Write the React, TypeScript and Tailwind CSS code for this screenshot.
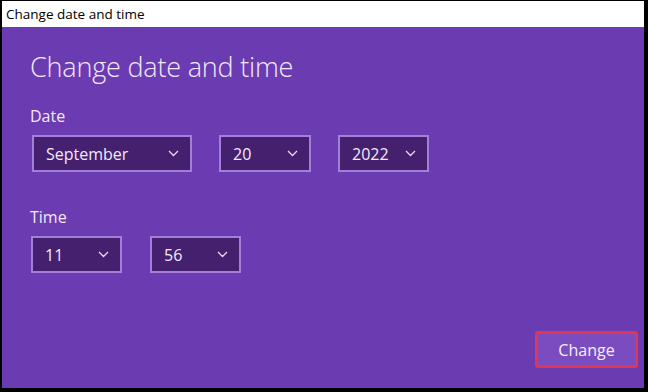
import React from "react";

function Chevron() {
  return (
    <svg width="11" height="7" viewBox="0 0 11 7" fill="none" className="shrink-0">
      <path d="M1 1L5.5 5.5L10 1" stroke="#e9dcf5" strokeWidth="1.3" />
    </svg>
  );
}

function Select({ value, width }: { value: string; width: string }) {
  return (
    <div
      className={`${width} h-[37px] flex items-center justify-between pl-[12px] pr-[11px] bg-[#45206f] border-2 border-[#a47fda] text-[16px] text-[#f3eafb]`}
    >
      <span>{value}</span>
      <Chevron />
    </div>
  );
}

export default function App() {
  return (
    <div
      className="w-[648px] h-[392px] bg-black pt-[1px] pl-[2px] pr-[4px] pb-[4px] flex flex-col"
      style={{ fontFamily: '"Open Sans", "Noto Sans", sans-serif' }}
    >
      <div className="h-[26px] bg-white flex items-center pl-[4px] text-[13.5px] text-black">
        Change date and time
      </div>
      <div className="flex-1 bg-[#6b3bb1] flex flex-col pl-[28px] pr-[6px] text-[#f3e8f8]">
        <h1 className="mt-[23px] text-[27px] font-light leading-[34px] tracking-[-0.2px]">
          Change date and time
        </h1>
        <div className="mt-[21px] text-[16px] leading-[22px]">Date</div>
        <div className="mt-[8px] flex gap-[27px] pl-[2px]">
          <Select value="September" width="w-[160px]" />
          <Select value="20" width="w-[92px]" />
          <Select value="2022" width="w-[91px]" />
        </div>
        <div className="mt-[34px] text-[16px] leading-[22px]">Time</div>
        <div className="mt-[8px] flex gap-[28px] pl-[1px]">
          <Select value="11" width="w-[91px]" />
          <Select value="56" width="w-[91px]" />
        </div>
        <div className="flex-1" />
        <div className="flex justify-end mb-[20px]">
          <button className="w-[103px] h-[37px] rounded-[3px] border-[3px] border-[#e0364f] bg-[#7a4cc0] text-[16px] text-[#f6eefb]">
            Change
          </button>
        </div>
      </div>
    </div>
  );
}
